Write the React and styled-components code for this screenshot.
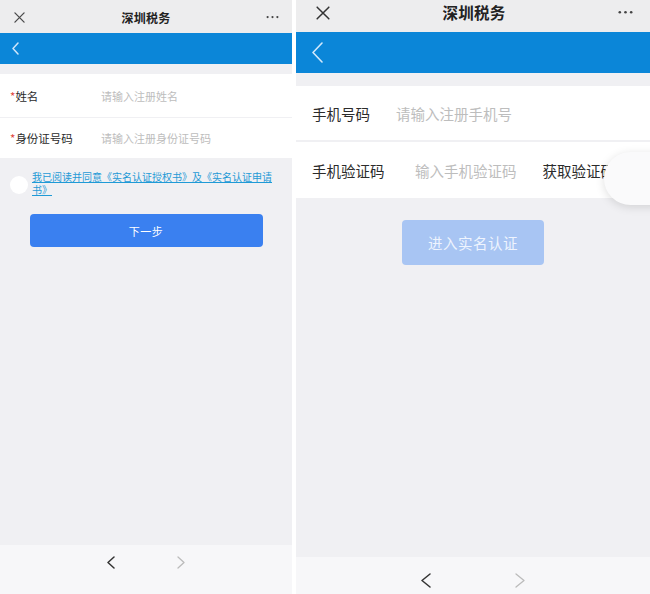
import React from "react";
import styled, { createGlobalStyle } from "styled-components";

const Global = createGlobalStyle`
  html, body { margin: 0; padding: 0; background: #ffffff; }
  body { font-family: "Noto Sans CJK SC", "Noto Sans", sans-serif; }
  * { box-sizing: border-box; }
`;

const Page = styled.div`
  display: flex;
  gap: 4px;
  width: 650px;
  height: 594px;
  background: #ffffff;
  overflow: hidden;
`;

const Phone = styled.div`
  position: relative;
  display: flex;
  flex-direction: column;
  width: ${(p) => p.$w}px;
  height: 594px;
  background: #f0f0f3;
  flex-shrink: 0;
  overflow: hidden;
`;

const TopBar = styled.div`
  display: flex;
  align-items: center;
  justify-content: space-between;
  height: ${(p) => p.$h}px;
  padding: ${(p) => p.$pad};
  background: #ededee;
  flex-shrink: 0;
`;

const Title = styled.div`
  font-size: ${(p) => p.$size}px;
  font-weight: 700;
  color: #222;
  letter-spacing: 0.3px;
  margin-top: ${(p) => p.$dy || 0}px;
`;

const IconSlot = styled.div`
  display: flex;
  align-items: center;
  justify-content: center;
  width: ${(p) => p.$w}px;
  margin-top: ${(p) => p.$dy || 0}px;
`;

const BlueBar = styled.div`
  display: flex;
  align-items: center;
  height: ${(p) => p.$h}px;
  padding-left: ${(p) => p.$pl}px;
  background: #0b86d8;
  flex-shrink: 0;
`;

const Gap = styled.div`
  height: ${(p) => p.$h}px;
  flex-shrink: 0;
`;

const Row = styled.div`
  display: flex;
  align-items: center;
  height: ${(p) => p.$h}px;
  padding-left: ${(p) => p.$pl}px;
  background: #ffffff;
  flex-shrink: 0;
  margin-bottom: ${(p) => p.$mb || 0}px;
`;

const Label = styled.div`
  width: ${(p) => p.$w}px;
  font-size: ${(p) => p.$size}px;
  color: #2b2b2b;
  white-space: nowrap;
`;

const Star = styled.span`
  color: #e0463c;
`;

const Placeholder = styled.div`
  font-size: ${(p) => p.$size}px;
  color: #bdbdbd;
  white-space: nowrap;
`;

const Action = styled.div`
  margin-left: ${(p) => p.$ml}px;
  font-size: 14.5px;
  color: #2b2b2b;
  white-space: nowrap;
`;

const Content = styled.div`
  flex: 1;
  display: flex;
  flex-direction: column;
  align-items: center;
  padding-top: ${(p) => p.$pt}px;
`;

const Agreement = styled.div`
  display: flex;
  align-items: center;
  width: 100%;
  padding: 0 16px 0 10px;
  gap: 4px;
`;

const Radio = styled.div`
  width: 18px;
  height: 18px;
  border-radius: 50%;
  background: #ffffff;
  flex-shrink: 0;
`;

const AgreeText = styled.a`
  font-size: 10px;
  line-height: 12.5px;
  color: #1f9ad6;
  text-decoration: underline;
  margin-top: -2px;
`;

const Button = styled.div`
  display: flex;
  align-items: center;
  justify-content: center;
  width: ${(p) => p.$w}px;
  height: ${(p) => p.$h}px;
  margin-top: ${(p) => p.$mt}px;
  border-radius: 4px;
  background: ${(p) => p.$bg};
  color: ${(p) => p.$fg};
  font-size: ${(p) => p.$size}px;
  letter-spacing: 0.5px;
`;

const BottomBar = styled.div`
  display: flex;
  justify-content: center;
  gap: ${(p) => p.$gap}px;
  height: ${(p) => p.$h}px;
  padding-top: ${(p) => p.$pt}px;
  background: #f7f7f9;
  flex-shrink: 0;
`;

const FloatBall = styled.div`
  position: absolute;
  left: 308px;
  top: 152px;
  width: 74px;
  height: 53px;
  border-radius: 27px;
  background: #fafafb;
  box-shadow: 0 2px 10px rgba(0, 0, 0, 0.13);
`;

const Close = ({ s, c = "#4a4a4a", w = 1.4 }) => (
  <svg width={s} height={s} viewBox="0 0 12 12">
    <path d="M1 1 L11 11 M11 1 L1 11" stroke={c} strokeWidth={w} strokeLinecap="round" />
  </svg>
);

const Dots = ({ w, r }) => (
  <svg width={w} height={r * 2 + 2} viewBox={`0 0 ${w} ${r * 2 + 2}`}>
    {[0, 1, 2].map((i) => (
      <circle key={i} cx={r + 0.5 + i * ((w - 2 * r - 1) / 2)} cy={r + 1} r={r} fill="#444" />
    ))}
  </svg>
);

const Chevron = ({ w, h, c, sw, dir = "left" }) => (
  <svg width={w} height={h} viewBox={`0 0 ${w} ${h}`}>
    <path
      d={
        dir === "left"
          ? `M${w - 1} 1 L1 ${h / 2} L${w - 1} ${h - 1}`
          : `M1 1 L${w - 1} ${h / 2} L1 ${h - 1}`
      }
      stroke={c}
      strokeWidth={sw}
      fill="none"
      strokeLinecap="round"
      strokeLinejoin="round"
    />
  </svg>
);

export default function App() {
  return (
    <>
      <Global />
      <Page>
        <Phone $w={292}>
          <TopBar $h={33} $pad="0 12px 0 13px">
            <IconSlot $w={13} $dy={2}>
              <Close s={11} />
            </IconSlot>
            <Title $size={12} $dy={2}>深圳税务</Title>
            <IconSlot $w={14} $dy={1}>
              <Dots w={13} r={1.1} />
            </IconSlot>
          </TopBar>
          <BlueBar $h={31} $pl={12}>
            <Chevron w={7} h={13} c="#cfe6fa" sw={1.5} />
          </BlueBar>
          <Gap $h={10} />
          <Row $h={43} $pl={10} $mb={1}>
            <Label $w={91} $size={11.5}>
              <Star>*</Star>姓名
            </Label>
            <Placeholder $size={11}>请输入注册姓名</Placeholder>
          </Row>
          <Row $h={40} $pl={10}>
            <Label $w={91} $size={11.5}>
              <Star>*</Star>身份证号码
            </Label>
            <Placeholder $size={11}>请输入注册身份证号码</Placeholder>
          </Row>
          <Content $pt={15}>
            <Agreement>
              <Radio />
              <AgreeText>我已阅读并同意《实名认证授权书》及《实名认证申请书》</AgreeText>
            </Agreement>
            <Button $w={233} $h={33} $mt={18} $bg="#3a80f0" $fg="#ffffff" $size={11}>
              下一步
            </Button>
          </Content>
          <BottomBar $h={49} $pt={11} $gap={62}>
            <Chevron w={8} h={13} c="#333" sw={1.5} />
            <Chevron w={8} h={13} c="#bbb" sw={1.3} dir="right" />
          </BottomBar>
        </Phone>

        <Phone $w={354}>
          <TopBar $h={32} $pad="0 16px 0 19px">
            <IconSlot $w={15} $dy={-7}>
              <Close s={14} c="#333" w={1.3} />
            </IconSlot>
            <Title $size={15.5} $dy={-9}>深圳税务</Title>
            <IconSlot $w={16} $dy={-8}>
              <Dots w={15} r={1.3} />
            </IconSlot>
          </TopBar>
          <BlueBar $h={41} $pl={16}>
            <Chevron w={11} h={21} c="#d2e8fb" sw={1.6} />
          </BlueBar>
          <Gap $h={13} />
          <Row $h={54} $pl={16} $mb={2}>
            <Label $w={84} $size={14.5}>手机号码</Label>
            <Placeholder $size={14.5}>请输入注册手机号</Placeholder>
          </Row>
          <Row $h={56} $pl={16}>
            <Label $w={103} $size={14.5}>手机验证码</Label>
            <Placeholder $size={14.5}>输入手机验证码</Placeholder>
            <Action $ml={26}>获取验证码</Action>
          </Row>
          <Content $pt={0}>
            <Button $w={142} $h={45} $mt={22} $bg="#a8c5f3" $fg="#eef4fe" $size={14.5}>
              进入实名认证
            </Button>
          </Content>
          <BottomBar $h={37} $pt={16} $gap={84}>
            <Chevron w={10} h={15} c="#333" sw={1.5} />
            <Chevron w={10} h={15} c="#bbb" sw={1.3} dir="right" />
          </BottomBar>
          <FloatBall />
        </Phone>
      </Page>
    </>
  );
}
